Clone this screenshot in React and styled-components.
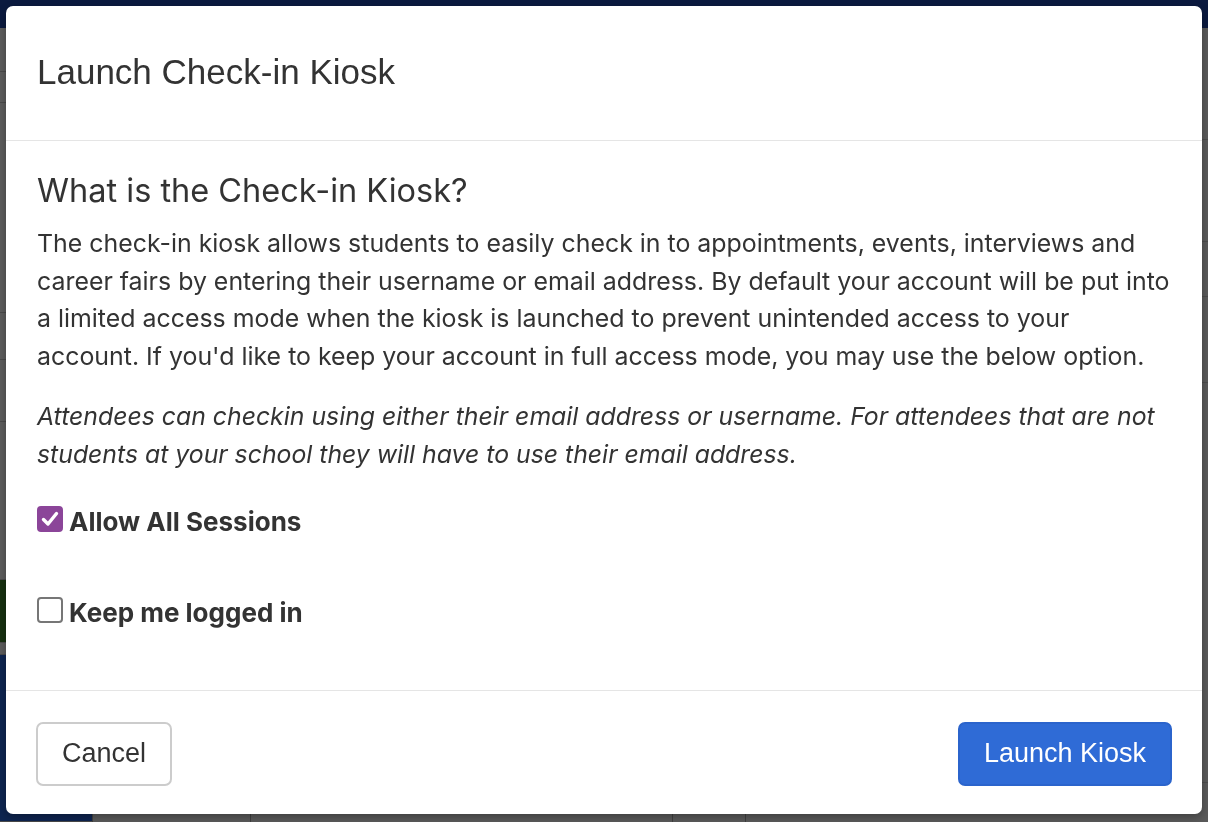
import React, { useState } from "react";
import styled, { createGlobalStyle } from "styled-components";

const GlobalStyle = createGlobalStyle`
  html, body {
    margin: 0;
    padding: 0;
    width: 100%;
    height: 100%;
    overflow: hidden;
  }
  body {
    font-family: Inter, "Noto Sans", sans-serif;
    color: #333;
    background: #595959;
  }
  * {
    box-sizing: border-box;
  }
`;

/* dimmed page behind the dialog */
const Page = styled.div`
  width: 100vw;
  height: 100vh;
  display: grid;
  grid-template-rows: 28px 1fr;
  background: #5a5a5a;
`;

const TopBar = styled.div`
  background: #0b1a3f;
`;

const PageBody = styled.div`
  display: grid;
  grid-template-columns: 92px 1fr;
`;

const SideNav = styled.div`
  display: grid;
  grid-template-rows: 44px 31px 210px 47px 62px 158px 63px 12px 1fr;
  background: #5c5c5c;
`;

const NavCell = styled.div`
  border-bottom: 1px solid #4a4a4a;
  background: ${(p) => p.$bg || "transparent"};
`;

const Content = styled.div`
  display: grid;
  grid-template-rows: 112px 102px 55px 86px 1fr 40px;
`;

const ContentRow = styled.div`
  border-bottom: 1px solid #4c4c4c;
`;

const FooterRow = styled.div`
  display: grid;
  grid-template-columns: 158px 422px 73px 1fr;
  border-top: 1px solid #4c4c4c;
  & > div {
    border-left: 1px solid #3f3f3f;
  }
`;

const Overlay = styled.div`
  position: fixed;
  inset: 0;
  padding: 6px;
  display: flex;
  align-items: flex-start;
`;

const Dialog = styled.div`
  width: 100%;
  height: 808px;
  background: #fff;
  border-radius: 7px;
  display: flex;
  flex-direction: column;
  box-shadow: 0 3px 9px rgba(0, 0, 0, 0.3);
`;

const Header = styled.div`
  height: 135px;
  padding: 0 31px;
  display: flex;
  align-items: center;
  border-bottom: 1px solid #e5e5e5;
`;

const Title = styled.h4`
  margin: 0 0 2px;
  font-family: "Liberation Sans", Arial, sans-serif;
  font-weight: 400;
  font-size: 35px;
  color: #333;
`;

const Body = styled.div`
  flex: 1;
  padding: 30px 10px 0 31px;
`;

const Heading = styled.h3`
  margin: 0 0 14px;
  font-weight: 400;
  font-size: 32.5px;
  line-height: 40px;
  color: #333;
`;

const Paragraph = styled.p`
  margin: 0 0 23px;
  font-size: ${(p) => (p.$italic ? 24.8 : 24.9)}px;
  line-height: 37.6px;
  white-space: nowrap;
  font-style: ${(p) => (p.$italic ? "italic" : "normal")};
  color: #333;
`;

const CheckRow = styled.label`
  display: flex;
  align-items: center;
  gap: 6px;
  margin-top: ${(p) => p.$top || 0}px;
  font-weight: 700;
  font-size: 26px;
  color: #333;
  cursor: pointer;
`;

const Box = styled.span`
  width: 26px;
  height: 26px;
  border-radius: 4px;
  display: inline-flex;
  align-items: center;
  justify-content: center;
  background: ${(p) => (p.$checked ? "#8b4599" : "#fff")};
  border: 2px solid ${(p) => (p.$checked ? "#8b4599" : "#767676")};
  margin-top: -5px;
`;

const Footer = styled.div`
  height: 124px;
  padding: 0 30px;
  border-top: 1px solid #e5e5e5;
  display: flex;
  align-items: center;
  justify-content: space-between;
`;

const Button = styled.button`
  height: 64px;
  padding: 0 24px;
  border-radius: 7px;
  font-family: "Liberation Sans", Arial, sans-serif;
  font-size: 27px;
  cursor: pointer;
  border: 2px solid ${(p) => (p.$primary ? "#2b64cc" : "#cccccc")};
  background: ${(p) => (p.$primary ? "#2f6bd6" : "#fff")};
  color: ${(p) => (p.$primary ? "#fff" : "#333")};
  margin-top: 2px;
`;

function Checkbox({ checked, onChange, children, top }) {
  return (
    <CheckRow $top={top} onClick={onChange}>
      <Box $checked={checked}>
        {checked && (
          <svg width="20" height="20" viewBox="0 0 20 20">
            <path d="M3.5 10.5 L8 15 L16.5 4.5" fill="none" stroke="#fff" strokeWidth="3.4" strokeLinecap="round" strokeLinejoin="round" />
          </svg>
        )}
      </Box>
      {children}
    </CheckRow>
  );
}

export default function App() {
  const [allSessions, setAllSessions] = useState(true);
  const [keepLogged, setKeepLogged] = useState(false);

  return (
    <>
      <GlobalStyle />
      <Page>
        <TopBar />
        <PageBody>
          <SideNav>
            <NavCell />
            <NavCell />
            <NavCell />
            <NavCell />
            <NavCell />
            <NavCell />
            <NavCell $bg="#16300f" />
            <NavCell />
            <NavCell $bg="#0e2550" />
          </SideNav>
          <Content>
            <ContentRow />
            <ContentRow />
            <ContentRow />
            <ContentRow />
            <div />
            <FooterRow>
              <div />
              <div />
              <div />
              <div />
            </FooterRow>
          </Content>
        </PageBody>
      </Page>

      <Overlay>
        <Dialog>
          <Header>
            <Title>Launch Check-in Kiosk</Title>
          </Header>
          <Body>
            <Heading>What is the Check-in Kiosk?</Heading>
            <Paragraph>
              The check-in kiosk allows students to easily check in to appointments, events, interviews and
              <br />
              career fairs by entering their username or email address. By default your account will be put into
              <br />
              a limited access mode when the kiosk is launched to prevent unintended access to your
              <br />
              account. If you'd like to keep your account in full access mode, you may use the below option.
            </Paragraph>
            <Paragraph $italic>
              Attendees can checkin using either their email address or username. For attendees that are not
              <br />
              students at your school they will have to use their email address.
            </Paragraph>
            <Checkbox checked={allSessions} onChange={() => setAllSessions(!allSessions)} top={32}>
              Allow All Sessions
            </Checkbox>
            <Checkbox checked={keepLogged} onChange={() => setKeepLogged(!keepLogged)} top={60}>
              Keep me logged in
            </Checkbox>
          </Body>
          <Footer>
            <Button>Cancel</Button>
            <Button $primary>Launch Kiosk</Button>
          </Footer>
        </Dialog>
      </Overlay>
    </>
  );
}
